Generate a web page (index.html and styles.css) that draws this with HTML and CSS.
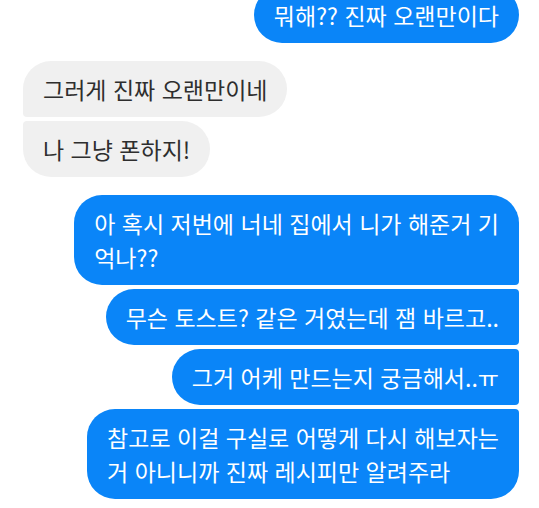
FILE: index.html
```html
<!DOCTYPE html>
<html lang="ko">
<head>
<meta charset="utf-8">
<title>Chat</title>
<link rel="stylesheet" href="styles.css">
</head>
<body>
<div class="chat">
  <div class="group group-out first-group">
    <div class="msg out top-msg">뭐해?? 진짜 오랜만이다</div>
  </div>
  <div class="group group-in">
    <div class="msg in">그러게 진짜 오랜만이네</div>
    <div class="msg in">나 그냥 폰하지!</div>
  </div>
  <div class="group group-out">
    <div class="msg out">아 혹시 저번에 너네 집에서 니가 해준거 기<br>억나??</div>
    <div class="msg out">무슨 토스트? 같은 거였는데 잼 바르고..</div>
    <div class="msg out">그거 어케 만드는지 궁금해서..ㅠ</div>
    <div class="msg out">참고로 이걸 구실로 어떻게 다시 해보자는<br>거 아니니까 진짜 레시피만 알려주라</div>
  </div>
</div>
</body>
</html>
```
FILE: styles.css
```css
html, body {
  margin: 0;
  padding: 0;
  background: #ffffff;
  overflow: hidden;
}

.chat {
  display: flex;
  flex-direction: column;
  gap: 18px;
  padding: 0 20px 0 23px;
  font-family: "Noto Sans CJK KR", "Noto Sans", sans-serif;
}

.group {
  display: flex;
  flex-direction: column;
  gap: 4px;
}

.first-group {
  margin-top: -13px;
}

.msg {
  font-size: 23px;
  line-height: 34px;
  padding: 11px 20px;
  border-radius: 28px;
  white-space: nowrap;
}

.top-msg {
  line-height: 30px;
  padding: 13px 20px;
}

.out {
  align-self: flex-end;
  background: #0a85f8;
  color: #ffffff;
}

.in {
  align-self: flex-start;
  background: #f0f0f0;
  color: #2e2e2e;
}

.group-out .msg:not(:last-child) {
  border-bottom-right-radius: 4px;
}

.group-out .msg:not(:first-child) {
  border-top-right-radius: 4px;
}

.group-in .msg:not(:last-child) {
  border-bottom-left-radius: 4px;
}

.group-in .msg:not(:first-child) {
  border-top-left-radius: 4px;
}
```
